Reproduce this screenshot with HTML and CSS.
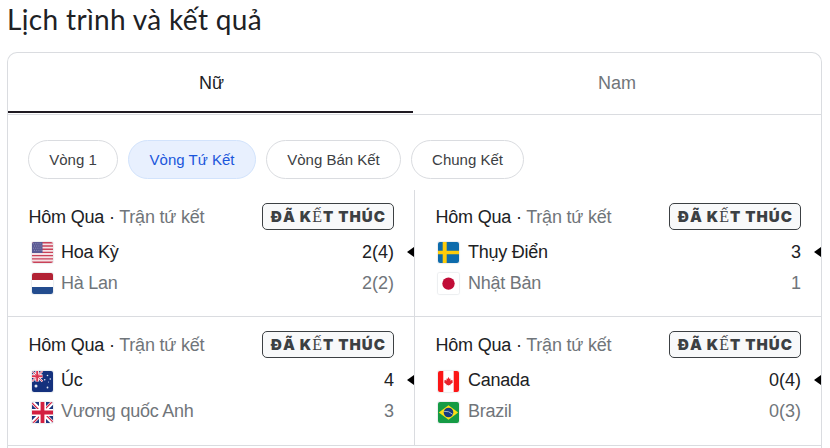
FILE: index.html
```html
<!DOCTYPE html>
<html lang="vi">
  <head>
    <meta charset="UTF-8" />
    <meta name="viewport" content="width=device-width, initial-scale=1.0" />
    <title>Lịch trình và kết quả</title>
    <link rel="stylesheet" href="styles.css">
  </head>
  <body>
    <!-- flags -->
    <svg class="sprite" width="0" height="0">
      <symbol id="us" viewBox="0 0 21 21">
        <path fill="#f5e3e6" d="M0 0h21v21H0z" />
        <path stroke="#c94258" stroke-width="1.4" d="M0 .7h21M0 4h21M0 7.2h21M0 10.4h21M0 13.6h21M0 16.9h21M0 20.2h21" />
        <path fill="#5a5a94" d="M0 0h10.5v11H0z" />
        <path stroke="#9a9bc0" stroke-width=".8" stroke-dasharray="1 1.2" d="M1 1.8h9M2 4h8M1 6.2h9M2 8.4h8" />
      </symbol>
      <symbol id="nl" viewBox="0 0 21 21">
        <path fill="#fff" d="M0 0h21v21H0z" />
        <path fill="#b22234" d="M0 0h21v7H0z" />
        <path fill="#234c8e" d="M0 14h21v7H0z" />
      </symbol>
      <symbol id="se" viewBox="0 0 21 21">
        <path fill="#0d6bab" d="M0 0h21v21H0z" />
        <path fill="#fecb0a" d="M4.7 0h4v21h-4zM0 8.7h21v3.6H0z" />
      </symbol>
      <symbol id="jp" viewBox="0 0 21 21">
        <path fill="#fff" d="M0 0h21v21H0z" />
        <circle cx="10.5" cy="10.6" r="6.2" fill="#c10c37" />
      </symbol>
      <symbol id="gb" viewBox="0 0 21 21">
        <path fill="#1c367f" d="M0 0h21v21H0z" />
        <path stroke="#fff" stroke-width="4" d="M0 0l21 21M21 0L0 21" />
        <path stroke="#d32040" stroke-width="1.2" d="M0 1l8 8M20 0l-8 8M13 12l8 8M1 21l8-8" />
        <path stroke="#fff" stroke-width="7" d="M10.5 0v21M0 10.5h21" />
        <path stroke="#d32040" stroke-width="3.8" d="M10.5 0v21M0 10.5h21" />
      </symbol>
      <symbol id="au" viewBox="0 0 21 21">
        <path fill="#14317d" d="M0 0h21v21H0z" />
        <path stroke="#f0dfe8" stroke-width="2.2" d="M0 0l10.5 10.5M10.5 0L0 10.5" />
        <path stroke="#fff" stroke-width="3.8" d="M5.2 0v10.5M0 5.2h10.5" />
        <path stroke="#dc3552" stroke-width="2" d="M5.2 0v10.5M0 5.2h10.5" />
        <path stroke="#dc3552" stroke-width=".8" d="M0 0l10.5 10.5M10.5 0L0 10.5" />
        <g fill="#e4e9f4">
          <circle cx="4" cy="15" r="1.5" />
          <circle cx="15.5" cy="4.5" r=".8" />
          <circle cx="12.7" cy="8.8" r=".8" />
          <circle cx="18.3" cy="8" r=".8" />
          <circle cx="16.5" cy="11" r=".5" />
          <circle cx="15.5" cy="16.5" r=".9" />
        </g>
      </symbol>
      <symbol id="ca" viewBox="0 0 21 21">
        <path fill="#fff" d="M0 0h21v21H0z" />
        <path fill="#fb1616" d="M0 0h5.3v21H0zM15.7 0H21v21h-5.3z" />
        <path fill="#e8232b" d="M10.5 6l1.1 2 1-.4-.3 2.2 1.2-1 .3.8 1.2-.2-.6 1.6.5.5-2.6 2 .2.8-1.8-.3V15h-.4v-1l-1.8.3.2-.8-2.6-2 .5-.5-.6-1.6 1.2.2.3-.8 1.2 1-.3-2.2 1 .4z" />
      </symbol>
      <symbol id="br" viewBox="0 0 21 21">
        <path fill="#159b45" d="M0 0h21v21H0z" />
        <path fill="#fbdf18" d="M10.5 3.2l9.7 7.3-9.7 7.3-9.7-7.3z" />
        <circle cx="10.5" cy="10.5" r="4.8" fill="#173a80" />
        <path stroke="#9eb2c9" fill="none" d="M6 9.3q5-.6 8.7 3" />
      </symbol>
    </svg>

    <h1>Lịch trình và kết quả</h1>
    <div class="card">
      <div class="tabs">
        <div class="tab active"><span>Nữ</span></div>
        <div class="tab"><span>Nam</span></div>
      </div>
      <div class="chips">
        <div class="chip chip-1">Vòng 1</div>
        <div class="chip chip-2 selected">Vòng Tứ Kết</div>
        <div class="chip chip-3">Vòng Bán Kết</div>
        <div class="chip chip-4">Chung Kết</div>
      </div>
      <div class="matches">
        <div class="match">
          <div class="match-head">
            <span class="when">Hôm Qua · <span>Trận tứ kết</span></span>
            <span class="badge">ĐÃ K<i>Ế</i>T THÚC</span>
          </div>
          <div class="team winner">
            <svg class="flag"><use href="#us" /></svg>
            <span class="name">Hoa Kỳ</span>
            <span class="score">2(4)</span>
          </div>
          <div class="team">
            <svg class="flag"><use href="#nl" /></svg>
            <span class="name">Hà Lan</span>
            <span class="score">2(2)</span>
          </div>
        </div>
        <div class="match">
          <div class="match-head">
            <span class="when">Hôm Qua · <span>Trận tứ kết</span></span>
            <span class="badge">ĐÃ K<i>Ế</i>T THÚC</span>
          </div>
          <div class="team winner">
            <svg class="flag"><use href="#se" /></svg>
            <span class="name">Thụy Điển</span>
            <span class="score">3</span>
          </div>
          <div class="team">
            <svg class="flag"><use href="#jp" /></svg>
            <span class="name">Nhật Bản</span>
            <span class="score">1</span>
          </div>
        </div>
        <div class="match low">
          <div class="match-head">
            <span class="when">Hôm Qua · <span>Trận tứ kết</span></span>
            <span class="badge">ĐÃ K<i>Ế</i>T THÚC</span>
          </div>
          <div class="team winner">
            <svg class="flag"><use href="#au" /></svg>
            <span class="name">Úc</span>
            <span class="score">4</span>
          </div>
          <div class="team">
            <svg class="flag"><use href="#gb" /></svg>
            <span class="name">Vương quốc Anh</span>
            <span class="score">3</span>
          </div>
        </div>
        <div class="match low">
          <div class="match-head">
            <span class="when">Hôm Qua · <span>Trận tứ kết</span></span>
            <span class="badge">ĐÃ K<i>Ế</i>T THÚC</span>
          </div>
          <div class="team winner">
            <svg class="flag"><use href="#ca" /></svg>
            <span class="name">Canada</span>
            <span class="score">0(4)</span>
          </div>
          <div class="team">
            <svg class="flag"><use href="#br" /></svg>
            <span class="name">Brazil</span>
            <span class="score">0(3)</span>
          </div>
        </div>
      </div>
    </div>
  </body>
</html>
```
FILE: styles.css
```css
* {
  box-sizing: border-box;
}

body {
  margin: 0;
  padding: 0 8px 0 7px;
  height: 448px;
  overflow: hidden;
  background: #fff;
  color: #202124;
  font-family: "Liberation Sans", Arial, sans-serif;
  white-space: nowrap;
}

.sprite {
  position: absolute;
}

h1 {
  margin: 0;
  height: 52px;
  line-height: 38px;
  font-family: Lato, sans-serif;
  font-size: 28px;
  font-weight: 400;
  letter-spacing: 0.35px;
}

.card {
  height: 396px;
  border: 1px solid #dadce0;
  border-bottom: none;
  border-radius: 10px 10px 0 0;
}

.tabs {
  display: flex;
  height: 62px;
  border-bottom: 1px solid #dadce0;
}

.tab {
  flex: 1;
  height: 60px;
  line-height: 61px;
  text-align: center;
  font-size: 18px;
  color: #70757a;
}

.tab.active {
  flex: 0 0 405px;
  padding-left: 2px;
  color: #202124;
  border-bottom: 2px solid #1f1a22;
}

.chips {
  display: flex;
  gap: 10px;
  height: 75px;
  padding: 25px 0 0 20px;
}

.chip {
  height: 39px;
  line-height: 37px;
  text-align: center;
  font-size: 15px;
  color: #3c4043;
  border: 1px solid #dadce0;
  border-radius: 20px;
}

.chip-1 {
  width: 90px;
}

.chip-2 {
  width: 128px;
}

.chip-3 {
  width: 135px;
}

.chip-4 {
  width: 113px;
}

.chip.selected {
  color: #1a56db;
  background: #e8f0fe;
  border-color: #d2e3fc;
}

.matches {
  display: grid;
  grid-template-columns: 407px 406px;
  grid-template-rows: 127px 129px;
}

.match {
  padding: 13px 20px 0;
  font-size: 18px;
  color: #70757a;
  border-bottom: 1px solid #dadce0;
}

.match:nth-child(odd) {
  border-right: 1px solid #dadce0;
}

.match.low {
  padding-top: 14px;
}

.match-head {
  display: flex;
  justify-content: space-between;
  height: 33px;
}

.when {
  padding-left: 0.5px;
  line-height: 29px;
  letter-spacing: -0.2px;
  color: #202124;
}

.when span {
  color: #70757a;
}

.badge {
  width: 132px;
  height: 27px;
  padding-left: 1px;
  line-height: 26px;
  text-align: center;
  font-family: Inter, sans-serif;
  font-size: 15px;
  font-weight: 900;
  letter-spacing: 1px;
  color: #3c4043;
  background: #f8f9fa;
  border: 1px solid #3c4043;
  border-radius: 5px;
}

.badge i {
  font-family: "Liberation Serif", serif;
  font-size: 16px;
  line-height: 1;
  font-style: normal;
  font-weight: 400;
}

.team {
  position: relative;
  display: flex;
  height: 31px;
  line-height: 33px;
}

.flag {
  width: 21px;
  height: 21px;
  margin: 6px 8px 0 4px;
  border-radius: 2px;
  box-shadow: 0 0 1px 1px #eceef0;
}

.match:nth-child(even) .flag {
  margin: 6px 9px 0 3px;
}

.match.low .flag {
  margin-top: 7px;
}

.name {
  letter-spacing: -0.25px;
}

.score {
  margin-left: auto;
}

.winner {
  color: #202124;
}

/* arrow on the cell edge next to the winning score */
.winner::after {
  content: "";
  position: absolute;
  right: -20px;
  top: 11px;
  width: 7px;
  height: 10px;
  background: #000;
  clip-path: polygon(0 50%, 100% 0, 100% 100%);
}
```
